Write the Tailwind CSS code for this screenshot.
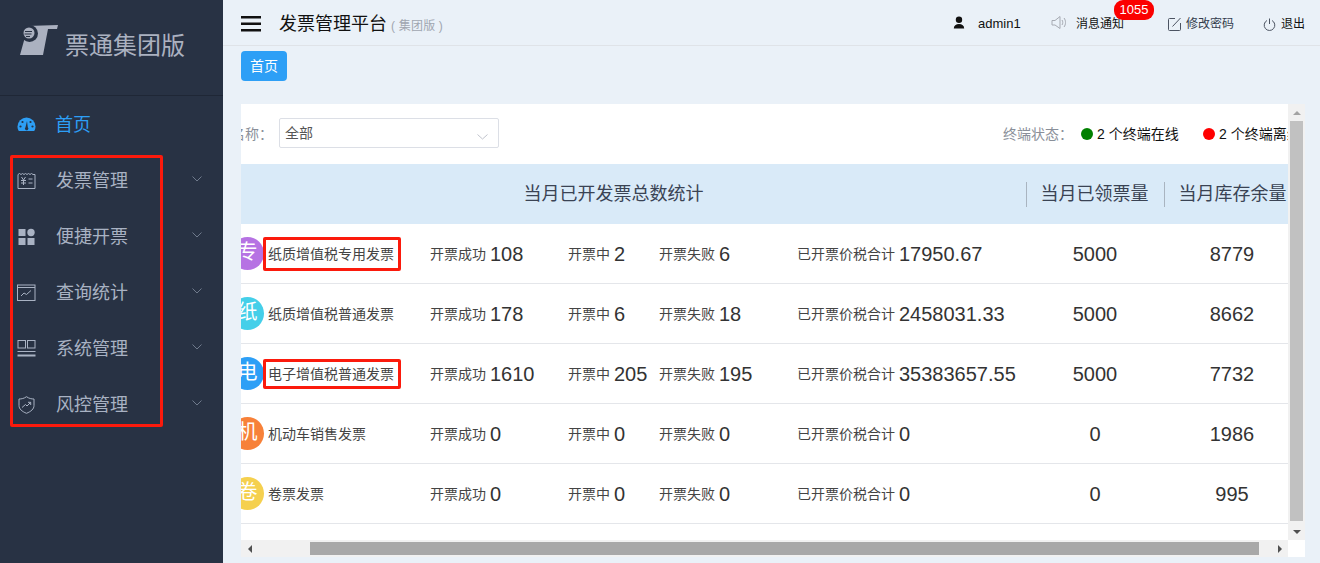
<!DOCTYPE html>
<html lang="zh-CN">
<head>
<meta charset="utf-8">
<script src="https://cdn.jsdelivr.net/npm/@tailwindcss/browser@4"></script>
<title>发票管理平台</title>
</head>
<body class="overflow-hidden">
<div class="relative flex h-[563px] w-[1320px] overflow-hidden bg-[#eaf1f8] font-['Liberation_Sans','Noto_Sans_CJK_SC',sans-serif]">
  <!-- sidebar -->
  <aside class="flex h-full w-[223px] shrink-0 flex-col bg-[#283244] text-[18px] text-[#a9b2c3]">
    <div class="flex h-[96px] items-start border-b border-[#1f2736] pl-[20px] pt-[25px]">
      <svg class="h-[30px] w-[38px] shrink-0" viewBox="0 0 38 30">
        <path d="M7 1L38 0L37 4H28L23 30H0L5 12Z" fill="#abb1c0"/>
        <circle cx="9.500" cy="8.500" r="8.500" fill="#283244"/>
        <circle cx="9" cy="8" r="5.500" fill="#abb1c0"/>
        <path d="M5 6.500H12M4.500 9H11.500M6 11.500H10" stroke="#283244" stroke-width="1"/>
      </svg>
      <span class="ml-[7px] mt-[4px] text-[24px] leading-[34px] text-[#abb1c0]">票通集团版</span>
    </div>
    <nav class="flex flex-col pt-px">
      <a class="flex h-[56px] items-center pl-[17px] text-[#2d9ff6]">
        <svg class="h-[18px] w-[19px]" viewBox="0 0 19 18"><path d="M9.500 1.500A9 9 0 0 0 .5 10.500C.5 12.200 1 13.700 1.800 15H17.200C18 13.700 18.500 12.200 18.500 10.500A9 9 0 0 0 9.500 1.500Z" fill="#2d9ff6"/><g fill="#283244"><circle cx="3.500" cy="10.500" r="1.100"/><circle cx="5.500" cy="6" r="1.100"/><circle cx="13.500" cy="6" r="1.100"/><circle cx="15.500" cy="10.500" r="1.100"/><path d="M10 5L10.800 11.200A1.700 1.700 0 1 1 8.500 11.200Z"/></g></svg>
        <span class="ml-[19px]">首页</span>
      </a>
      <a class="flex h-[56px] items-center pl-[17px]">
        <svg class="h-[18px] w-[19px]" viewBox="0 0 19 18" fill="none" stroke="#a9b2c3"><path d="M1 2.500L2.500 1.500 4 2.500 5.500 1.500 7 2.500 8.500 1.500 10 2.500 11.500 1.500 13 2.500 14.500 1.500 16 2.500 18 2.500V16.500H1Z"/><path d="M4.500 5L6.500 8 8.500 5M4 8.500H9M4 11H9M6.500 8V13M11.500 7H15.500M11.500 11H15.500" stroke-width="1"/></svg>
        <span class="ml-[20px] w-[136px]">发票管理</span>
        <svg class="-mt-[4px] h-[6px] w-[10px]" viewBox="0 0 10 6" fill="none" stroke="#6f7a8c"><path d="M.5.5L5 5 9.500.5"/></svg>
      </a>
      <a class="flex h-[56px] items-center pl-[17px]">
        <svg class="h-[18px] w-[19px]" viewBox="0 0 19 18" fill="#a9b2c3"><rect x="1.500" y="1" width="7" height="7"/><circle cx="14" cy="4.500" r="3.700"/><rect x="1.500" y="10" width="7" height="7"/><rect x="10.500" y="10" width="7" height="7"/></svg>
        <span class="ml-[20px] w-[136px]">便捷开票</span>
        <svg class="-mt-[4px] h-[6px] w-[10px]" viewBox="0 0 10 6" fill="none" stroke="#6f7a8c"><path d="M.5.5L5 5 9.500.5"/></svg>
      </a>
      <a class="flex h-[56px] items-center pl-[17px]">
        <svg class="h-[18px] w-[19px]" viewBox="0 0 19 18" fill="none" stroke="#a9b2c3"><rect x=".5" y="1" width="17.500" height="15.500"/><path d="M.5 3.500H18M4 12L7 9 9.500 10.500 14 6.500"/></svg>
        <span class="ml-[20px] w-[136px]">查询统计</span>
        <svg class="-mt-[4px] h-[6px] w-[10px]" viewBox="0 0 10 6" fill="none" stroke="#6f7a8c"><path d="M.5.5L5 5 9.500.5"/></svg>
      </a>
      <a class="flex h-[56px] items-center pl-[17px]">
        <svg class="h-[18px] w-[19px]" viewBox="0 0 19 18" fill="none" stroke="#a9b2c3"><rect x="1" y=".5" width="7.500" height="7.500"/><rect x="10.500" y=".5" width="7.500" height="7.500"/><path d="M.5 11.500H18.500"/><path d="M.5 15.500H18.500" stroke-width="2"/></svg>
        <span class="ml-[20px] w-[136px]">系统管理</span>
        <svg class="-mt-[4px] h-[6px] w-[10px]" viewBox="0 0 10 6" fill="none" stroke="#6f7a8c"><path d="M.5.5L5 5 9.500.5"/></svg>
      </a>
      <a class="flex h-[56px] items-center pl-[17px]">
        <svg class="h-[18px] w-[19px]" viewBox="0 0 19 18" fill="none" stroke="#a9b2c3"><path d="M9.500.7C7 2.500 4.500 3 2 3V9.500C2 13 5 15.500 9.500 17.300 14 15.500 17 13 17 9.500V3C14.500 3 12 2.500 9.500.7Z"/><path d="M5 11.500L8.500 8.500 10 10 13.500 6.500M11 6.300H13.700V9"/></svg>
        <span class="ml-[20px] w-[136px]">风控管理</span>
        <svg class="-mt-[4px] h-[6px] w-[10px]" viewBox="0 0 10 6" fill="none" stroke="#6f7a8c"><path d="M.5.5L5 5 9.500.5"/></svg>
      </a>
    </nav>
  </aside>

  <main class="flex min-w-0 flex-1 flex-col">
    <!-- header -->
    <header class="flex h-[46px] shrink-0 items-center border-b border-[#dfe3e8] pl-[18px] pt-[3px] text-[12px] text-[#111]">
      <svg class="h-[16px] w-[20px]" viewBox="0 0 20 16" fill="#111"><rect y="0" width="20" height="2.500"/><rect y="6.500" width="20" height="2.500"/><rect y="13" width="20" height="2.500"/></svg>
      <span class="ml-[18px] text-[18px] leading-[26px] text-[#111]">发票管理平台</span>
      <span class="ml-[4px] mt-[4px] text-[12px] tracking-[0.2px] text-[#a0a6b0]">( 集团版 )</span>
      <div class="ml-auto flex items-center">
        <svg class="-mt-[3px] h-[14px] w-[12px]" viewBox="0 0 12 14" fill="#111"><circle cx="6" cy="3.700" r="3.200"/><path d="M.8 12.500C.8 9.500 3 8 6 8S11.200 9.500 11.200 12.500Z"/></svg>
        <span class="ml-[13px] w-[73px] text-[13px]">admin1</span>
        <svg class="-mt-[3px] h-[16px] w-[16px]" viewBox="0 0 16 16" fill="none" stroke="#a6aab2"><path d="M1 5.500H4L9 1.500V13.500L4 10H1Z"/><path d="M11 5C12 6.500 12 8.500 11 10M13 3C15 5.500 15 9.500 13 12"/></svg>
        <span class="relative ml-[9px] w-[48px]">消息通知
          <span class="absolute left-[38px] top-[-15px] h-[20px] w-[40px] rounded-[9px] bg-[#fb0000] text-center text-[13px] leading-[19px] text-white">1055</span>
        </span>
        <svg class="ml-[44px] h-[14px] w-[14px]" viewBox="0 0 14 14" fill="none" stroke="#4c5462"><path d="M7 1.500H1.500a1 1 0 0 0-1 1V12.500a1 1 0 0 0 1 1H11.500a1 1 0 0 0 1-1V6"/><path d="M4.500 9.500L12.500 1"/></svg>
        <span class="ml-[4px] w-[48px] text-[#333c4d]">修改密码</span>
        <svg class="ml-[29px] h-[13px] w-[13px]" viewBox="0 0 13 13" fill="none" stroke="#4c5462"><path d="M4 2.500A5.300 5.300 0 1 0 9 2.500M6.500 .5V6"/></svg>
        <span class="ml-[5px] mr-[15px] w-[24px] text-[#111]">退出</span>
      </div>
    </header>

    <!-- tab -->
    <div class="flex h-[58px] shrink-0 items-start pl-[18px] pt-[5px]">
      <span class="flex h-[30px] w-[46px] items-center justify-center rounded-[4px] bg-[#2d9ff6] text-[14px] text-white">首页</span>
    </div>

    <!-- panel -->
    <section class="ml-[18px] grid h-[453px] w-[1064px] grid-cols-[1047px_17px] grid-rows-[436px_17px] bg-white">
      <div class="overflow-hidden">
        <div class="w-[1300px] -ml-[10px]">
          <div class="flex h-[60px] items-center text-[14px] text-[#8a8f99]">
            <span class="w-[48px] whitespace-nowrap pr-[10px] text-right">名称<span class="font-['Noto_Sans_CJK_TC']">：</span></span>
            <div class="relative mb-[2px] flex h-[30px] w-[220px] items-center rounded-[2px] border border-[#dcdfe6] pl-[5px] pt-px text-[14px] text-[#555]">全部
              <svg class="absolute right-[10px] top-[15px] h-[6px] w-[11px]" viewBox="0 0 11 6" fill="none" stroke="#c0c4cc"><path d="M.5.5L5.500 5 10.500.5"/></svg>
            </div>
            <span class="ml-[504px] w-[78px] whitespace-nowrap">终端状态<span class="font-['Noto_Sans_CJK_TC']">：</span></span>
            <span class="h-[12px] w-[12px] rounded-full bg-[#008000]"></span>
            <span class="ml-[4px] w-[106px] whitespace-nowrap text-[#111]">2 个终端在线</span>
            <span class="h-[12px] w-[12px] rounded-full bg-[#ff0000]"></span>
            <span class="ml-[4px] whitespace-nowrap text-[#111]">2 个终端离线</span>
          </div>
          <div class="flex h-[60px] items-center bg-[#d9eaf8] pt-px text-[18px] text-[#3a4354]">
            <span class="w-[765px] text-center">当月已开发票总数统计</span>
            <span class="ml-[30px] flex h-[25px] w-[138px] items-center justify-center border-l border-[#a9b4c0] pr-[2px]">当月已领票量</span>
            <span class="flex h-[25px] w-[138px] items-center justify-center border-l border-[#a9b4c0] pr-[2px]">当月库存余量</span>
          </div>

          <div class="flex h-[60px] items-center border-b border-[#e4e6ea] text-[14px] text-[#444]">
            <div class="flex w-[199px] items-center"><span class="-mt-px flex h-[33px] w-[33px] items-center justify-center rounded-full bg-[#b672e3] pb-[2px] text-[20px] text-white">专</span><span class="ml-[4px] mt-[2px] whitespace-nowrap">纸质增值税专用发票</span></div>
            <div class="flex w-[138px] items-center gap-[4px] pt-[2px]">开票成功 <b class="-mt-[2px] text-[20px] font-normal text-[#333]">108</b></div>
            <div class="flex w-[91px] items-center gap-[4px] pt-[2px]">开票中 <b class="-mt-[2px] text-[20px] font-normal text-[#333]">2</b></div>
            <div class="flex w-[138px] items-center gap-[4px] pt-[2px]">开票失败 <b class="-mt-[2px] text-[20px] font-normal text-[#333]">6</b></div>
            <div class="flex w-[229px] items-center gap-[4px] pt-[2px]">已开票价税合计 <b class="-mt-[2px] text-[20px] font-normal text-[#333]">17950.67</b></div>
            <div class="w-[138px] text-center text-[20px] text-[#333]">5000</div>
            <div class="w-[136px] text-center text-[20px] text-[#333]">8779</div>
          </div>
          <div class="flex h-[60px] items-center border-b border-[#e4e6ea] text-[14px] text-[#444]">
            <div class="flex w-[199px] items-center"><span class="-mt-px flex h-[33px] w-[33px] items-center justify-center rounded-full bg-[#45cfe9] pb-[2px] text-[20px] text-white">纸</span><span class="ml-[4px] mt-[2px] whitespace-nowrap">纸质增值税普通发票</span></div>
            <div class="flex w-[138px] items-center gap-[4px] pt-[2px]">开票成功 <b class="-mt-[2px] text-[20px] font-normal text-[#333]">178</b></div>
            <div class="flex w-[91px] items-center gap-[4px] pt-[2px]">开票中 <b class="-mt-[2px] text-[20px] font-normal text-[#333]">6</b></div>
            <div class="flex w-[138px] items-center gap-[4px] pt-[2px]">开票失败 <b class="-mt-[2px] text-[20px] font-normal text-[#333]">18</b></div>
            <div class="flex w-[229px] items-center gap-[4px] whitespace-nowrap pt-[2px]">已开票价税合计 <b class="-mt-[2px] text-[20px] font-normal text-[#333]">2458031.33</b></div>
            <div class="w-[138px] text-center text-[20px] text-[#333]">5000</div>
            <div class="w-[136px] text-center text-[20px] text-[#333]">8662</div>
          </div>
          <div class="flex h-[60px] items-center border-b border-[#e4e6ea] text-[14px] text-[#444]">
            <div class="flex w-[199px] items-center"><span class="-mt-px flex h-[33px] w-[33px] items-center justify-center rounded-full bg-[#2d9ff6] pb-[2px] text-[20px] text-white">电</span><span class="ml-[4px] mt-[2px] whitespace-nowrap">电子增值税普通发票</span></div>
            <div class="flex w-[138px] items-center gap-[4px] pt-[2px]">开票成功 <b class="-mt-[2px] text-[20px] font-normal text-[#333]">1610</b></div>
            <div class="flex w-[91px] items-center gap-[4px] whitespace-nowrap pt-[2px]">开票中 <b class="-mt-[2px] text-[20px] font-normal text-[#333]">205</b></div>
            <div class="flex w-[138px] items-center gap-[4px] pt-[2px]">开票失败 <b class="-mt-[2px] text-[20px] font-normal text-[#333]">195</b></div>
            <div class="flex w-[229px] items-center gap-[4px] whitespace-nowrap pt-[2px]">已开票价税合计 <b class="-mt-[2px] text-[20px] font-normal text-[#333]">35383657.55</b></div>
            <div class="w-[138px] text-center text-[20px] text-[#333]">5000</div>
            <div class="w-[136px] text-center text-[20px] text-[#333]">7732</div>
          </div>
          <div class="flex h-[60px] items-center border-b border-[#e4e6ea] text-[14px] text-[#444]">
            <div class="flex w-[199px] items-center"><span class="-mt-px flex h-[33px] w-[33px] items-center justify-center rounded-full bg-[#f78139] pb-[2px] text-[20px] text-white">机</span><span class="ml-[4px] mt-[2px] whitespace-nowrap">机动车销售发票</span></div>
            <div class="flex w-[138px] items-center gap-[4px] pt-[2px]">开票成功 <b class="-mt-[2px] text-[20px] font-normal text-[#333]">0</b></div>
            <div class="flex w-[91px] items-center gap-[4px] pt-[2px]">开票中 <b class="-mt-[2px] text-[20px] font-normal text-[#333]">0</b></div>
            <div class="flex w-[138px] items-center gap-[4px] pt-[2px]">开票失败 <b class="-mt-[2px] text-[20px] font-normal text-[#333]">0</b></div>
            <div class="flex w-[229px] items-center gap-[4px] pt-[2px]">已开票价税合计 <b class="-mt-[2px] text-[20px] font-normal text-[#333]">0</b></div>
            <div class="w-[138px] text-center text-[20px] text-[#333]">0</div>
            <div class="w-[136px] text-center text-[20px] text-[#333]">1986</div>
          </div>
          <div class="flex h-[60px] items-center border-b border-[#e4e6ea] text-[14px] text-[#444]">
            <div class="flex w-[199px] items-center"><span class="-mt-px flex h-[33px] w-[33px] items-center justify-center rounded-full bg-[#f5d04f] pb-[2px] text-[20px] text-white">卷</span><span class="ml-[4px] mt-[2px] whitespace-nowrap">卷票发票</span></div>
            <div class="flex w-[138px] items-center gap-[4px] pt-[2px]">开票成功 <b class="-mt-[2px] text-[20px] font-normal text-[#333]">0</b></div>
            <div class="flex w-[91px] items-center gap-[4px] pt-[2px]">开票中 <b class="-mt-[2px] text-[20px] font-normal text-[#333]">0</b></div>
            <div class="flex w-[138px] items-center gap-[4px] pt-[2px]">开票失败 <b class="-mt-[2px] text-[20px] font-normal text-[#333]">0</b></div>
            <div class="flex w-[229px] items-center gap-[4px] pt-[2px]">已开票价税合计 <b class="-mt-[2px] text-[20px] font-normal text-[#333]">0</b></div>
            <div class="w-[138px] text-center text-[20px] text-[#333]">0</div>
            <div class="w-[136px] text-center text-[20px] text-[#333]">995</div>
          </div>
        </div>
      </div>
      <!-- vertical scrollbar -->
      <div class="flex flex-col items-center bg-[#f1f1f1]">
        <div class="flex h-[17px] w-full items-center justify-center"><span class="h-0 w-0 border-x-[4px] border-b-[4px] border-x-transparent border-b-[#a3a3a3]"></span></div>
        <div class="h-[400px] w-[13px] bg-[#c1c1c1]"></div>
        <div class="mt-auto flex h-[17px] w-full items-center justify-center"><span class="h-0 w-0 border-x-[4px] border-t-[4px] border-x-transparent border-t-[#505050]"></span></div>
      </div>
      <!-- horizontal scrollbar -->
      <div class="flex items-center bg-[#f1f1f1]">
        <div class="flex h-[17px] w-[17px] items-center justify-center"><span class="h-0 w-0 border-y-[4px] border-r-[4px] border-y-transparent border-r-[#505050]"></span></div>
        <div class="ml-[52px] h-[13px] w-[949px] bg-[#a8a8a8]"></div>
        <div class="ml-auto flex h-[17px] w-[17px] items-center justify-center"><span class="h-0 w-0 border-y-[4px] border-l-[4px] border-y-transparent border-l-[#505050]"></span></div>
      </div>
      <div class="bg-white"></div>
    </section>
  </main>

  <!-- red annotation boxes over the picture -->
  <div class="pointer-events-none absolute left-[10px] top-[155px] h-[272px] w-[153px] rounded-[2px] border-[3px] border-[#fb1a0c]"></div>
  <div class="pointer-events-none absolute left-[263px] top-[237px] h-[34px] w-[138px] rounded-[2px] border-[3px] border-[#fb1a0c]"></div>
  <div class="pointer-events-none absolute left-[263px] top-[359px] h-[30px] w-[138px] rounded-[2px] border-[3px] border-[#fb1a0c]"></div>
</div>
</body>
</html>
